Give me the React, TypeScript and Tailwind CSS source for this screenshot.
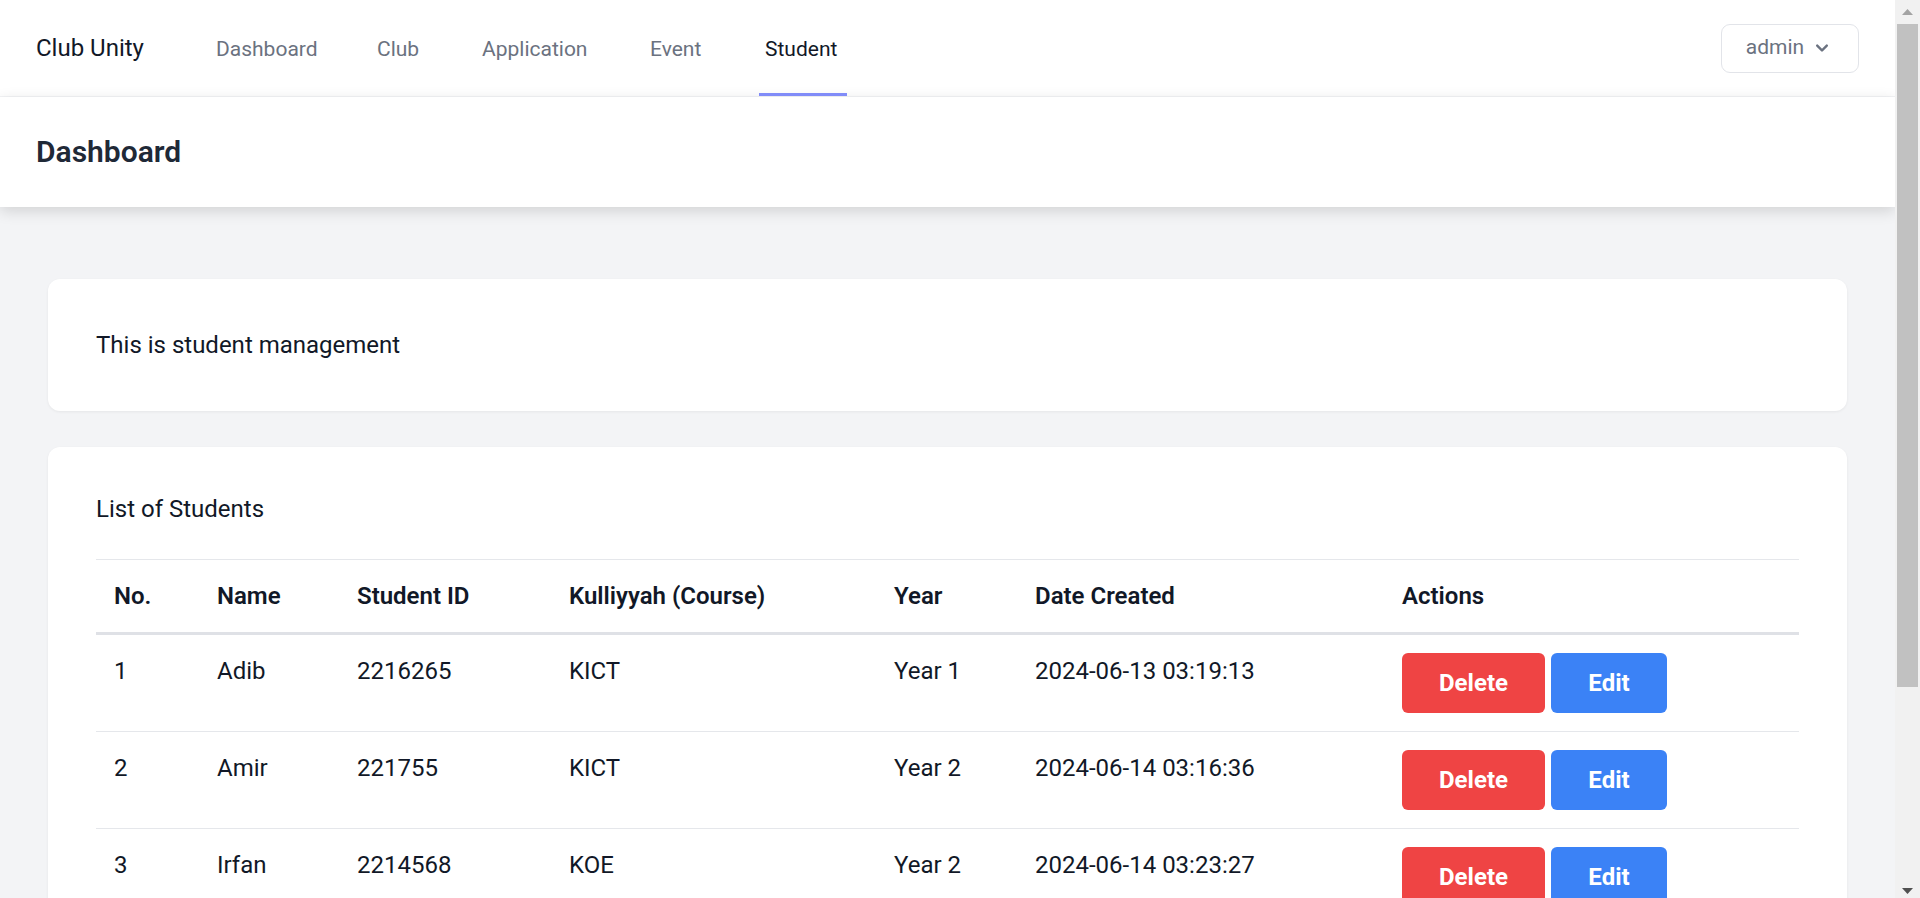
import React from "react";

const links = [
  { label: "Dashboard", w: "w-[113px]", active: false },
  { label: "Club", w: "w-[57px]", active: false },
  { label: "Application", w: "w-[120px]", active: false },
  { label: "Event", w: "w-[67px]", active: false },
  { label: "Student", w: "w-[88px]", active: true },
];

const students = [
  { no: 1, name: "Adib", id: "2216265", course: "KICT", year: "Year 1", date: "2024-06-13 03:19:13" },
  { no: 2, name: "Amir", id: "221755", course: "KICT", year: "Year 2", date: "2024-06-14 03:16:36" },
  { no: 3, name: "Irfan", id: "2214568", course: "KOE", year: "Year 2", date: "2024-06-14 03:23:27" },
  { no: 4, name: "Hakim", id: "2213390", course: "KOE", year: "Year 3", date: "2024-06-14 03:31:02" },
];

function ScrollbarStrip() {
  return (
    <div className="w-[25px] h-[898px] shrink-0 bg-[#f1f1f1] flex flex-col">
      <div className="h-[24px] flex justify-center pt-[9px]">
        <svg width="11" height="6" viewBox="0 0 11 6">
          <path d="M5.5 0L11 6H0z" fill="#a3a3a3" />
        </svg>
      </div>
      <div className="h-[663px] mx-[2px] bg-[#c1c1c1]" />
      <div className="flex-1" />
      <div className="h-[25px] flex justify-center pt-[15px]">
        <svg width="11" height="6" viewBox="0 0 11 6">
          <path d="M0 0H11L5.5 6z" fill="#505050" />
        </svg>
      </div>
    </div>
  );
}

export default function App() {
  return (
    <div className="flex items-start bg-[#f3f4f6] [font-family:Roboto,'Noto_Sans',sans-serif]">
      <div className="flex-1 min-w-0 min-h-screen">
        <nav className="bg-white border-b border-[#f3f4f6]">
          <div className="flex justify-between h-[96px] px-[36px]">
            <div className="flex">
              <div className="flex items-center w-[174px] text-[24px] text-[#111827] whitespace-nowrap">
                Club Unity
              </div>
              <div className="flex gap-[48px]">
                {links.map((l) => (
                  <div
                    key={l.label}
                    className={
                      l.active
                        ? `${l.w} flex items-center px-[6px] pt-[6px] border-b-[3px] border-[#818cf8] text-[21px] font-normal text-[#111827] whitespace-nowrap`
                        : `${l.w} flex items-center px-[6px] pt-[6px] border-b-[3px] border-transparent text-[21px] font-normal text-[#6b7280] whitespace-nowrap`
                    }
                  >
                    {l.label}
                  </div>
                ))}
              </div>
            </div>
            <div className="flex items-center">
              <button className="flex items-center justify-center w-[138px] h-[49px] border border-[#e2e4e9] rounded-[9px] bg-white text-[21px] font-normal text-[#6b7280]">
                <span>admin</span>
                <svg className="ml-[6px] w-[24px] h-[24px] fill-current" viewBox="0 0 20 20">
                  <path
                    fillRule="evenodd"
                    d="M5.293 7.293a1 1 0 011.414 0L10 10.586l3.293-3.293a1 1 0 111.414 1.414l-4 4a1 1 0 01-1.414 0l-4-4a1 1 0 010-1.414z"
                    clipRule="evenodd"
                  />
                </svg>
              </button>
            </div>
          </div>
        </nav>

        <header className="bg-white shadow-[0_4px_14px_rgba(0,0,0,0.14)]">
          <div className="px-[36px] py-[36px]">
            <h2 className="text-[30px] leading-[37.5px] font-semibold text-[#1f2937]">Dashboard</h2>
          </div>
        </header>

        <main className="py-[72px] px-[48px]">
          <div className="bg-white rounded-[12px] shadow-[0_1px_3px_rgba(0,0,0,0.06)] p-[48px] text-[24px] leading-[36px] text-[#111827]">
            This is student management
          </div>

          <div className="mt-[36px] bg-white rounded-[12px] shadow-[0_1px_3px_rgba(0,0,0,0.06)] px-[48px] pt-[44px] pb-[48px]">
            <div className="text-[24px] leading-[36px] text-[#111827] mb-[32px]">List of Students</div>
            <table className="w-full table-fixed border-collapse text-left text-[24px] leading-[36px] text-[#111827]">
              <colgroup>
                <col className="w-[103px]" />
                <col className="w-[140px]" />
                <col className="w-[212px]" />
                <col className="w-[325px]" />
                <col className="w-[141px]" />
                <col className="w-[367px]" />
                <col />
              </colgroup>
              <thead>
                <tr className="border-t border-b-[3px] border-t-[#e5e7eb] border-b-[#dfe1e6]">
                  <th className="px-[18px] py-[18px] font-semibold">No.</th>
                  <th className="px-[18px] py-[18px] font-semibold">Name</th>
                  <th className="px-[18px] py-[18px] font-semibold">Student ID</th>
                  <th className="px-[18px] py-[18px] font-semibold">Kulliyyah (Course)</th>
                  <th className="px-[18px] py-[18px] font-semibold">Year</th>
                  <th className="px-[18px] py-[18px] font-semibold">Date Created</th>
                  <th className="px-[18px] py-[18px] font-semibold">Actions</th>
                </tr>
              </thead>
              <tbody>
                {students.map((s) => (
                  <tr key={s.no} className="border-b border-[#e5e7eb]">
                    <td className="px-[18px] py-[18px] align-top">{s.no}</td>
                    <td className="px-[18px] py-[18px] align-top">{s.name}</td>
                    <td className="px-[18px] py-[18px] align-top">{s.id}</td>
                    <td className="px-[18px] py-[18px] align-top">{s.course}</td>
                    <td className="px-[18px] py-[18px] align-top">{s.year}</td>
                    <td className="px-[18px] py-[18px] align-top whitespace-nowrap">{s.date}</td>
                    <td className="px-[18px] py-[18px] align-top">
                      <div className="flex gap-[6px]">
                        <button className="w-[143px] h-[60px] rounded-[6px] bg-[#ef4444] text-white font-bold">Delete</button>
                        <button className="w-[116px] h-[60px] rounded-[6px] bg-[#3b82f6] text-white font-bold">Edit</button>
                      </div>
                    </td>
                  </tr>
                ))}
              </tbody>
            </table>
          </div>
        </main>
      </div>
      <ScrollbarStrip />
    </div>
  );
}
